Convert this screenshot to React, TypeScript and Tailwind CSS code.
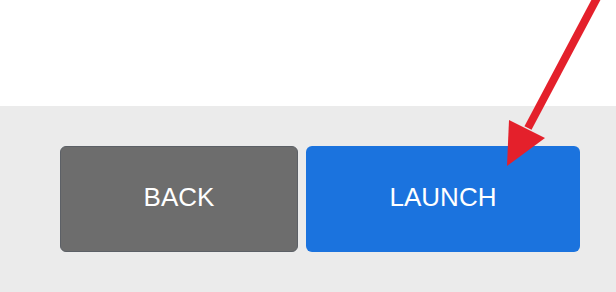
export default function App() {
  return (
    <div className="relative w-[616px] h-[292px] overflow-hidden bg-white font-['Liberation_Sans',Arial,sans-serif]">
      <div className="h-[106px] bg-white" />
      <div className="flex h-[186px] gap-[8px] bg-[#ebebeb] pl-[60px] pt-[40px]">
        <button className="flex h-[106px] w-[238px] items-center justify-center rounded-[6px] border border-[#5c6066] bg-[#6d6d6d] pb-[4px] text-[26px] text-white">
          BACK
        </button>
        <button className="flex h-[106px] w-[274px] items-center justify-center rounded-[6px] bg-[#1b73de] pb-[4px] text-[26px] text-white">
          LAUNCH
        </button>
      </div>

      {/* annotation arrow */}
      <svg className="pointer-events-none absolute left-0 top-0" width="616" height="292" viewBox="0 0 616 292">
        <line x1="598" y1="-4" x2="528" y2="128" stroke="#e4202b" strokeWidth="8" />
        <polygon points="509,120 545,138 507,166" fill="#e4202b" />
      </svg>
    </div>
  );
}
